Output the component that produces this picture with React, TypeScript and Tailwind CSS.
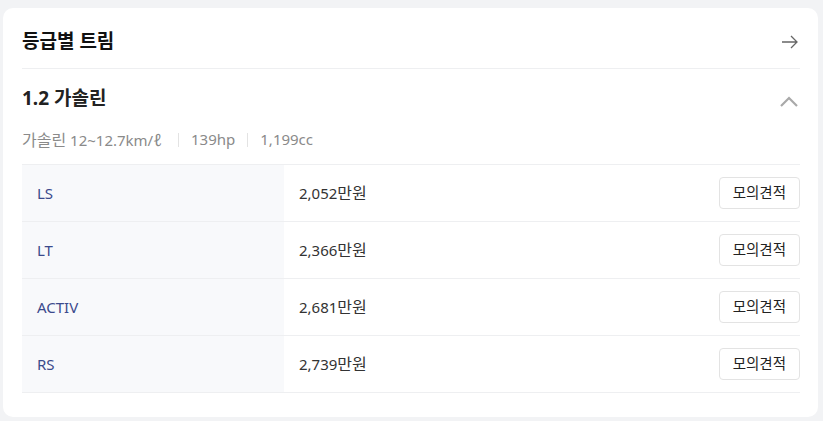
const trims = [
  { name: "LS", price: "2,052", unit: "만원" },
  { name: "LT", price: "2,366", unit: "만원" },
  { name: "ACTIV", price: "2,681", unit: "만원" },
  { name: "RS", price: "2,739", unit: "만원" },
];

const font = { fontFamily: '"Noto Sans", "Noto Sans CJK KR", sans-serif' };

export default function App() {
  return (
    <div className="w-[823px] h-[421px] bg-[#f2f3f5] pt-[8px] pl-[3px]" style={font}>
      <div className="w-[815px] h-[409px] rounded-[10px] bg-white pl-[19px] pr-[18px]">
        {/* header */}
        <div className="flex h-[61px] items-center justify-between border-b border-[#eeeff1] pt-[7px]">
          <h2 className="text-[19px] font-bold leading-none text-[#111]">등급별 트림</h2>
          <svg width="16" height="14" viewBox="0 0 16 14" fill="none" stroke="#666" strokeWidth="1.3" className="mr-[2px]">
            <path d="M0 7h15M9 1l6 6-6 6" />
          </svg>
        </div>

        {/* engine section */}
        <div className="flex items-center justify-between pt-[20px]">
          <h3 className="text-[19px] font-bold leading-none text-[#222]">1.2 가솔린</h3>
          <svg width="18" height="11" viewBox="0 0 18 11" fill="none" stroke="#a9a9a9" strokeWidth="2.2" className="mr-[2px] mt-[6px]">
            <path d="M1 10l8-8 8 8" />
          </svg>
        </div>
        <div className="mt-[23px] flex items-center text-[15px] leading-none text-[#8a8a8a]">
          <span>
            <span className="text-[16px]">가솔린</span> 12~12.7km/<span className="text-[17px]">ℓ</span>
          </span>
          <span className="ml-[16px] mr-[12px] h-[14px] w-px bg-[#e3e3e3]" />
          <span>139hp</span>
          <span className="mx-[12px] h-[14px] w-px bg-[#e3e3e3]" />
          <span>1,199cc</span>
        </div>

        {/* trim table */}
        <div className="mt-[16px] border-t border-[#eeeff1]">
          {trims.map((t) => (
            <div key={t.name} className="flex h-[57px] border-b border-[#eeeff1]">
              <div className="flex w-[262px] items-center bg-[#f8f9fb] pl-[15px] text-[15px] text-[#3b4a8c]">
                {t.name}
              </div>
              <div className="flex flex-1 items-center justify-between pl-[15px]">
                <span className="text-[15px] text-[#333]">
                  {t.price}
                  <span className="text-[16px]">{t.unit}</span>
                </span>
                <button className="h-[32px] rounded-[4px] border border-[#e3e3e3] bg-white px-[13px] text-[14.5px] text-[#222]">
                  모의견적
                </button>
              </div>
            </div>
          ))}
        </div>
      </div>
    </div>
  );
}
